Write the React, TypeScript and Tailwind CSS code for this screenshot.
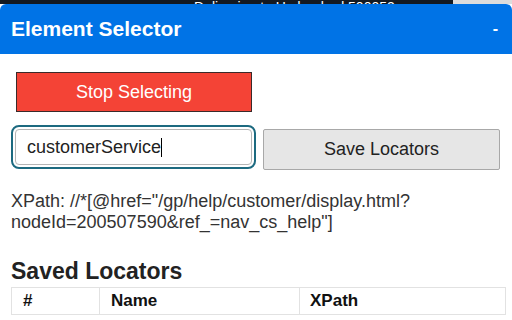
const App = () => {
    return (
        <main className="w-[512px] h-[320px] overflow-hidden bg-white font-['Liberation_Sans',Arial,sans-serif]">
            {/* page behind the popup */}
            <div className="h-[4px] overflow-hidden bg-[#131921] flex text-white text-[14px] leading-none">
                <span className="pl-[2px] w-[190px] font-bold">amazon</span>
                <span className="w-[263px] pl-[4px]">Delivering to Hyderabad 500052</span>
                <span className="flex-1 bg-[#dcdcdc]"></span>
            </div>
            <div className="rounded-t-[6px] overflow-hidden">
                <div className="h-[50px] bg-[#0073e6] text-white font-bold text-[21px] flex items-center justify-between pl-[11px] pr-[14px]">
                    <span>Element Selector</span>
                    <span className="text-[16px]">-</span>
                </div>
                <div className="px-[11px]">
                    <button className="mt-[18px] ml-[5px] w-[236px] h-[40px] bg-[#f44336] border border-[#3a2a2a] text-white text-[18px]">
                        Stop Selecting
                    </button>
                    <div className="flex items-start gap-[11px] mt-[17px] ml-[4px]">
                        <div className="w-[237px] h-[36px] border border-[#b5b5b5] rounded-[4px] outline-2 outline-offset-[2px] outline-[#1d6a80] flex items-center pl-[11px] text-[18px] text-[#222]">
                            customerService<span className="w-px h-[19px] bg-black"></span>
                        </div>
                        <button className="w-[237px] h-[41px] bg-[#e6e6e6] border border-[#a8a8a8] rounded-[2px] text-[18px] text-[#222]">
                            Save Locators
                        </button>
                    </div>
                    <p className="mt-[21px] text-[18px] leading-[21px] text-[#333] pr-[20px]">
                        XPath: //*[@href="/gp/help/customer/display.html?nodeId=200507590&amp;ref_=nav_cs_help"]
                    </p>
                    <h2 className="mt-[26px] text-[23px] font-bold text-[#222] leading-[24px]">Saved Locators</h2>
                    <table className="mt-[4px] w-[495px] border-collapse text-[17px] font-bold text-[#111]">
                        <thead>
                            <tr className="h-[25px]">
                                <th className="w-[88px] border border-[#e2e2e2] text-left px-[11px] py-0">#</th>
                                <th className="w-[200px] border border-[#e2e2e2] text-left px-[11px] py-0">Name</th>
                                <th className="border border-[#e2e2e2] text-left px-[10px] py-0">XPath</th>
                            </tr>
                        </thead>
                    </table>
                </div>
            </div>
        </main>
    )
}
export default App
